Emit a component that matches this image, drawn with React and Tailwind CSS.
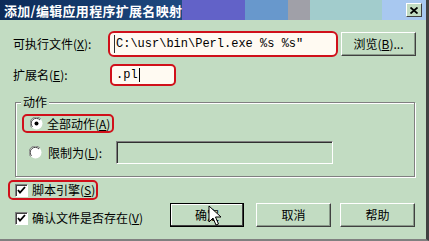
import React from "react";

const cjk = { fontFamily: '"Noto Sans CJK SC", "Noto Sans", sans-serif' };
const mono = { fontFamily: '"Liberation Mono", "DejaVu Sans Mono", monospace' };

function Btn({ children, focused, className = "" }) {
  return (
    <div
      className={
        "h-[24px] flex items-center justify-center text-[12px] text-black bg-[#c2dcc2] border " +
        (focused
          ? "border-black shadow-[inset_-1px_-1px_0_#404040,inset_1px_1px_0_#ffffff] "
          : "border-t-white border-l-white border-r-[#404040] border-b-[#404040] shadow-[inset_-1px_-1px_0_#8a9a8a] ") +
        className
      }
      style={cjk}
    >
      {children}
    </div>
  );
}

function Check() {
  return (
    <div className="w-[13px] h-[13px] bg-white border border-t-[#808080] border-l-[#808080] border-r-white border-b-white shadow-[inset_1px_1px_0_#404040] flex items-center justify-center">
      <svg width="9" height="9" viewBox="0 0 9 9">
        <path d="M1 4 L3 6.5 L8 1" stroke="#000" strokeWidth="1.8" fill="none" />
      </svg>
    </div>
  );
}

function Radio({ checked }) {
  return (
    <svg width="13" height="13" viewBox="0 0 13 13">
      <circle cx="6.5" cy="6.5" r="6" fill="#fff" />
      <path d="M11 2.2 A6 6 0 0 0 1.5 10.5" stroke="#808080" strokeWidth="1" fill="none" />
      <path d="M10 3 A5 5 0 0 0 2.5 9.8" stroke="#404040" strokeWidth="1" fill="none" />
      {checked && <circle cx="6.5" cy="6.5" r="2" fill="#000" />}
    </svg>
  );
}

export default function App() {
  return (
    <div className="w-[429px] h-[241px] bg-[#c2dcc2] relative overflow-hidden flex flex-col border-r-[3px] border-r-[#404040] border-b-2 border-b-[#808080]">
      {/* title bar */}
      <div className="h-[20px] flex items-center justify-between pl-[4px] pr-[4px] bg-[linear-gradient(to_right,#0c2a58_0px,#1e4a80_182px,#6262c8_182px,#6262c8_245px,#6898cc_245px,#6898cc_288px,#a0a0a8_288px,#a0a0a8_310px,#a2cccc_310px,#a2cccc_382px,#a8c8f0_382px)]">
        <span className="text-white font-bold text-[13px] leading-none tracking-[0.3px]" style={cjk}>
          添加/编辑应用程序扩展名映射
        </span>
        <div className="w-[16px] h-[14px] bg-[#c2dcc2] border border-t-white border-l-white border-r-[#404040] border-b-[#404040] flex items-center justify-center">
          <svg width="8" height="7" viewBox="0 0 8 7">
            <path d="M0.5 0.5 L7.5 6.5 M7.5 0.5 L0.5 6.5" stroke="#000" strokeWidth="1.8" />
          </svg>
        </div>
      </div>

      {/* row 1 */}
      <div className="mt-[11px] flex items-center h-[26px]">
        <span className="pl-[13px] w-[108px] text-[12px] text-black" style={cjk}>
          可执行文件(<span className="underline">X</span>):
        </span>
        <div className="w-[230px] h-[26px] border-2 border-[#d0101a] rounded-[6px] bg-[#fffaf2] flex items-center pl-[4px]">
          <div className="h-[18px] border-l border-[#303030] pl-[1px] text-[12px] leading-[18px] text-black whitespace-nowrap" style={mono}>
            C:\usr\bin\Perl.exe %s %s"
          </div>
        </div>
        <Btn className="ml-[3px] w-[75px]">
          浏览(<span className="underline">B</span>)...
        </Btn>
      </div>

      {/* row 2 */}
      <div className="mt-[7px] flex items-center h-[22px]">
        <span className="pl-[13px] w-[110px] text-[12px] text-black" style={cjk}>
          扩展名(<span className="underline">E</span>):
        </span>
        <div className="w-[66px] h-[22px] border-2 border-[#d0101a] rounded-[5px] bg-[#fffaf2] flex items-center pl-[4px]">
          <span className="text-[12px] text-black" style={mono}>.pl</span>
          <span className="w-[1px] h-[14px] bg-black ml-[1px]" />
        </div>
      </div>

      {/* group box */}
      <div className="mt-[16px] mx-[15px] w-[400px] h-[75px] relative border border-[#808080] shadow-[inset_1px_1px_0_#ffffff,1px_1px_0_#ffffff] flex flex-col">
        <span className="absolute left-[5px] top-[-9px] px-[2px] bg-[#c2dcc2] text-[12px] leading-[16px] text-black" style={cjk}>
          动作
        </span>
        <div className="mt-[11px] ml-[6px] w-[92px] h-[19px] border-2 border-[#d0101a] rounded-[5px] flex items-center pl-[6px] gap-[4px]">
          <Radio checked />
          <span className="text-[12px] text-black" style={cjk}>
            全部动作(<span className="underline">A</span>)
          </span>
        </div>
        <div className="mt-[8px] flex items-center h-[23px] pl-[13px]">
          <Radio />
          <span className="ml-[6px] w-[68px] text-[12px] text-black" style={cjk}>
            限制为(<span className="underline">L</span>):
          </span>
          <div className="w-[217px] h-[23px] border border-t-[#808080] border-l-[#808080] border-r-white border-b-white shadow-[inset_1px_1px_0_#303030]" />
        </div>
      </div>

      {/* bottom */}
      <div className="mt-[3px] flex">
        <div className="flex flex-col pl-[8px]">
          <div className="w-[90px] h-[20px] border-2 border-[#d0101a] rounded-[5px] flex items-center pl-[5px] gap-[4px]">
            <Check />
            <span className="text-[12px] text-black" style={cjk}>
              脚本引擎(<span className="underline">S</span>)
            </span>
          </div>
          <div className="mt-[9px] flex items-center pl-[7px] gap-[4px]">
            <Check />
            <span className="text-[12px] text-black" style={cjk}>
              确认文件是否存在(<span className="underline">V</span>)
            </span>
          </div>
        </div>
        <div className="ml-[27px] mt-[23px] flex">
          <Btn focused className="w-[74px]">确定</Btn>
          <Btn className="w-[75px] ml-[12px]">取消</Btn>
          <Btn className="w-[75px] ml-[9px]">帮助</Btn>
        </div>
      </div>

      {/* mouse cursor */}
      <svg className="absolute left-[208px] top-[205px]" width="14" height="22" viewBox="0 0 14 22">
        <path d="M1 1 L1 17 L5 13 L8 20 L10.5 19 L7.5 12 L13 12 Z" fill="#fff" stroke="#000" strokeWidth="1" strokeLinejoin="miter" />
      </svg>
    </div>
  );
}
